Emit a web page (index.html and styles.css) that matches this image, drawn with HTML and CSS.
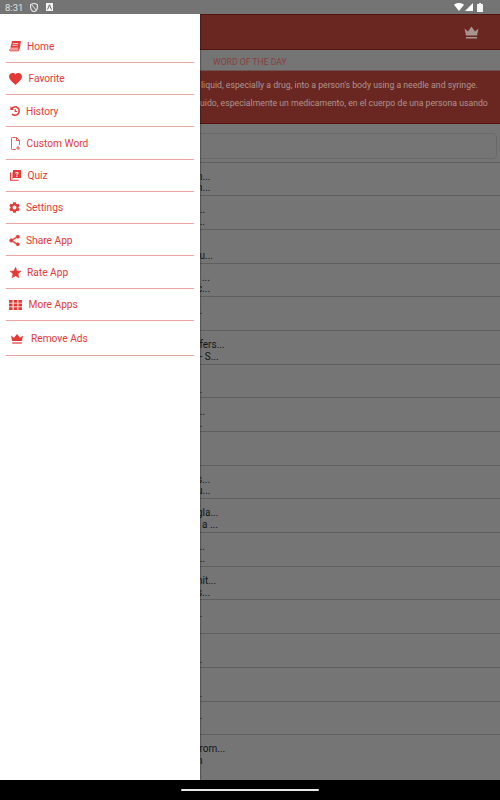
FILE: index.html
```html
<!DOCTYPE html>
<html lang="en">
<head>
  <meta charset="UTF-8">
  <meta name="viewport" content="width=device-width, initial-scale=1.0">
  <title>Dictionary</title>
  <link rel="stylesheet" href="styles.css">
</head>
<body>
  <div class="screen">
    <!-- Status bar -->
    <div class="status-bar">
      <span class="status-time">8:31</span>
      <svg class="status-shield" width="8" height="9" viewBox="0 0 8 9"><path d="M4 .3 7.4 1.6v2.6C7.4 6.400 5.900 8 4 8.700 2.100 8 .6 6.400 .6 4.200V1.600z" fill="none" stroke="#e2e2e2" stroke-width="1.200"/><path d="M1.500 1.500 6.500 7.500" stroke="#e2e2e2" stroke-width="1"/></svg>
      <svg class="status-a" width="7" height="8" viewBox="0 0 7 8"><rect width="7" height="8" fill="#f2f2f2"/><path d="M1.500 6.500 3.500 1.800 5.500 6.500" fill="none" stroke="#666" stroke-width="1"/></svg>
      <div class="status-right">
        <svg width="10" height="8" viewBox="0 0 10 8"><path d="M0 1.800C2.800-.6 7.200-.6 10 1.800L5 8z" fill="#fff"/></svg>
        <svg width="8" height="8" viewBox="0 0 8 8"><path d="M8 0V8H0z" fill="#fff"/></svg>
        <svg class="status-battery" width="6" height="9" viewBox="0 0 6 9"><path d="M2 0h2v1h2v8H0V1h2z" fill="#f4f4f4"/></svg>
      </div>
    </div>

    <div class="main">
      <!-- App behind the drawer -->
      <div class="app">
        <div class="app-header">
          <svg width="15" height="13" viewBox="0 0 15 13"><path d="M.5 2.500 4 5.500 7.500.5 11 5.500 14.500 2.500 13 9.500H2z" fill="#a8938f"/><rect x="2" y="11" width="11" height="1.500" fill="#a8938f"/></svg>
        </div>
        <div class="wod-title">WORD OF THE DAY</div>
        <div class="wod-card">
          <div class="wod-en">liquid, especially a drug, into a person's body using a needle and syringe.</div>
          <div class="wod-es">uido, especialmente un medicamento, en el cuerpo de una persona usando</div>
        </div>
        <div class="search-box"></div>
        <div class="word-list">
          <div class="word-row"><div>n...</div><div>n...</div></div>
          <div class="word-row"><div>...</div><div>...</div></div>
          <div class="word-row"><div>.</div><div>&nbsp;u...</div></div>
          <div class="word-row"><div>&nbsp;&nbsp;...</div><div>c...</div></div>
          <div class="word-row"><div>..</div><div>.</div></div>
          <div class="word-row"><div>ifers...</div><div>&nbsp;- S...</div></div>
          <div class="word-row"><div>&nbsp;</div><div>..</div></div>
          <div class="word-row"><div>...</div><div>..</div></div>
          <div class="word-row"></div>
          <div class="word-row"><div>s...</div><div>u...</div></div>
          <div class="word-row"><div>gla...</div><div>&nbsp;&nbsp;a ...</div></div>
          <div class="word-row"><div>...</div><div>...</div></div>
          <div class="word-row"><div>nit...</div><div>s...</div></div>
          <div class="word-row"><div>..</div><div>.</div></div>
          <div class="word-row"><div>&nbsp;</div><div>..</div></div>
          <div class="word-row"><div>&nbsp;</div><div>..</div></div>
          <div class="word-row"><div>..</div><div>&nbsp;</div></div>
          <div class="word-row word-row-last"><div>&nbsp;rom...</div><div>n</div></div>
        </div>
      </div>

      <!-- Navigation drawer -->
      <nav class="drawer">
        <a class="nav-item">
          <svg class="nav-icon" width="12" height="11" viewBox="0 0 12 11"><path d="M3 .5h8.500L9.500 8H1.500C.4 8 .2 9.800 1.300 9.800H9.500l1.500-6" fill="none" stroke="#e53935" stroke-width="1"/><path d="M3 .5h8.500L9.800 6.800H1.400z" fill="#e53935"/><path d="M3.800 2.500h5.500M3.300 4.300h5.500" stroke="#fff" stroke-width=".7"/></svg>
          <span>Home</span>
        </a>
        <a class="nav-item gap-wide">
          <svg class="nav-icon" width="13" height="12" viewBox="2 3 20 18.400"><path d="M12 21.350l-1.450-1.320C5.400 15.360 2 12.280 2 8.500 2 5.420 4.420 3 7.500 3c1.740 0 3.410.81 4.500 2.090C13.090 3.810 14.760 3 16.500 3 19.580 3 22 5.420 22 8.500c0 3.780-3.400 6.860-8.550 11.540L12 21.350z"/></svg>
          <span>Favorite</span>
        </a>
        <a class="nav-item">
          <svg class="nav-icon icon-shift" width="10" height="10" viewBox="0 0 10 10"><path d="M1.700 2.500A4.200 4.200 0 1 1 2 8" fill="none" stroke="#e53935" stroke-width="1.500"/><path d="M.4.300V3.900H4z" fill="#e53935"/><path d="M5.200 3V5.500H7" fill="none" stroke="#e53935" stroke-width="1.100"/></svg>
          <span>History</span>
        </a>
        <a class="nav-item gap-wide">
          <svg class="nav-icon icon-shift-2" width="9" height="13" viewBox="0 0 9 13"><path d="M5 12.500H1.200C.8 12.500.5 12.200.5 11.800V1.200C.5.800.8.500 1.200.500H5.500L8.500 3.500V8" fill="none" stroke="#e53935" stroke-width=".8"/><path d="M5.500.5V3.500H8.500" fill="none" stroke="#e53935" stroke-width=".8"/><path d="M7 9V13M5 11H9" stroke="#e53935" stroke-width=".8"/></svg>
          <span>Custom Word</span>
        </a>
        <a class="nav-item gap-wide">
          <svg class="nav-icon icon-shift" width="11" height="11" viewBox="0 0 11 11"><rect x="3" y="0" width="8" height="8" fill="#e53935"/><path d="M.6 2.500V10.300H8.500" fill="none" stroke="#e53935" stroke-width="1.100"/><rect x="2" y="2" width="1" height="7" fill="#e99a97"/><text x="7" y="6.800" class="quiz-mark">?</text></svg>
          <span>Quiz</span>
        </a>
        <a class="nav-item">
          <svg class="nav-icon" width="11" height="11" viewBox="2.500 2 19 20"><path d="M19.140 12.940c.04-.3.060-.61.060-.94 0-.32-.02-.64-.07-.94l2.030-1.580c.18-.14.230-.41.120-.61l-1.920-3.320c-.12-.22-.37-.29-.59-.22l-2.390.96c-.5-.38-1.030-.7-1.620-.94l-.36-2.540c-.04-.24-.24-.41-.48-.41h-3.840c-.24 0-.43.17-.47.41l-.36 2.540c-.59.24-1.130.57-1.620.94l-2.390-.96c-.22-.08-.47 0-.59.22L2.740 8.870c-.12.21-.08.47.12.61l2.030 1.580c-.05.3-.09.63-.09.94s.02.64.07.94l-2.030 1.580c-.18.14-.23.41-.12.61l1.920 3.320c.12.22.37.29.59.22l2.390-.96c.5.38 1.030.7 1.620.94l.36 2.540c.05.24.24.41.48.41h3.840c.24 0 .44-.17.47-.41l.36-2.540c.59-.24 1.130-.56 1.620-.94l2.390.96c.22.08.47 0 .59-.22l1.920-3.320c.12-.22.070-.47-.12-.61l-2.010-1.580zM12 15.600c-1.980 0-3.600-1.620-3.600-3.600s1.620-3.600 3.600-3.600 3.600 1.620 3.600 3.600-1.620 3.600-3.600 3.600z"/></svg>
          <span>Settings</span>
        </a>
        <a class="nav-item">
          <svg class="nav-icon icon-bold" width="11" height="11" viewBox="3 2 18 20"><path d="M18 16.080c-.76 0-1.440.3-1.960.77L8.910 12.700c.05-.23.090-.46.090-.7s-.04-.47-.09-.7l7.050-4.110c.54.5 1.250.81 2.040.81 1.660 0 3-1.340 3-3s-1.340-3-3-3-3 1.340-3 3c0 .24.040.47.090.7L8.040 9.810C7.500 9.310 6.790 9 6 9c-1.660 0-3 1.340-3 3s1.340 3 3 3c.79 0 1.500-.31 2.040-.81l7.120 4.160c-.05.21-.08.43-.08.65 0 1.610 1.310 2.920 2.920 2.920s2.920-1.310 2.920-2.920-1.310-2.920-2.920-2.920z"/></svg>
          <span>Share App</span>
        </a>
        <a class="nav-item">
          <svg class="nav-icon icon-shift icon-bold" width="11" height="11" viewBox="2 2 20 19"><path d="M12 17.270L18.180 21l-1.640-7.030L22 9.240l-7.190-.61L12 2 9.190 8.630 2 9.240l5.460 4.730L5.820 21z"/></svg>
          <span>Rate App</span>
        </a>
        <a class="nav-item gap-wide">
          <svg class="nav-icon" width="13" height="10" viewBox="0 0 13 10"><path d="M0 0h3.600v2.800H0zM4.700 0h3.600v2.800H4.700zM9.400 0H13v2.800H9.400zM0 3.600h3.600v2.800H0zM4.700 3.600h3.600v2.800H4.700zM9.400 3.600H13v2.800H9.400zM0 7.200h3.600V10H0zM4.700 7.200h3.600V10H4.700zM9.400 7.200H13V10H9.400z"/></svg>
          <span>More Apps</span>
        </a>
        <a class="nav-item nav-item-last">
          <svg class="nav-icon icon-shift-2" width="12" height="10" viewBox="0 0 12 10"><path d="M0 1.500 3 3.800 6 0 9 3.800 12 1.500 10.800 7H1.200z"/><rect x="1.200" y="8.400" width="9.600" height="1.200"/></svg>
          <span>Remove Ads</span>
        </a>
      </nav>
    </div>

    <!-- Bottom gesture bar -->
    <div class="gesture-bar"><div class="gesture-handle"></div></div>
  </div>
</body>
</html>
```

FILE: styles.css
```css
html, body {
  margin: 0;
  padding: 0;
}

body {
  font-family: Roboto, "Liberation Sans", sans-serif;
}

.screen {
  width: 500px;
  height: 800px;
  display: flex;
  flex-direction: column;
  overflow: hidden;
  background: #757575;
}

/* Status bar */
.status-bar {
  height: 14px;
  flex: none;
  display: flex;
  align-items: center;
  padding: 0 17px 0 5px;
  background: #747474;
  color: #e2e2e2;
  font-size: 9.5px;
}

.status-time {
  width: 25px;
}

.status-shield {
  margin-right: 8px;
}

.status-right {
  margin-left: auto;
  display: flex;
  align-items: center;
  gap: 1px;
}

.status-battery {
  margin-left: 3px;
}

/* App behind the drawer */
.main {
  flex: 1;
  position: relative;
  overflow: hidden;
}

.app-header {
  height: 34px;
  display: flex;
  align-items: center;
  justify-content: flex-end;
  padding-right: 21px;
  background: #6a2721;
  border-top: 1px solid #551410;
  border-bottom: 1px solid #551410;
}

.wod-title {
  height: 20px;
  line-height: 24px;
  padding-left: 213px;
  font-size: 8.650px;
  color: #86403b;
  background: #757575;
  border-bottom: 1px solid #6d5552;
}

.wod-card {
  height: 52px;
  font-size: 8.700px;
  line-height: 18px;
  color: #b09490;
  background: #6a2721;
  border-bottom: 1px solid #551410;
  white-space: nowrap;
}

.wod-en {
  padding: 5px 0 0 201px;
}

.wod-es {
  padding-left: 200px;
}

.search-box {
  height: 24px;
  margin: 9px 3px 2.500px 190px;
  border: 1px solid #6a6a6a;
  border-radius: 4px;
}

.word-list {
  border-top: 1px solid #5f5f5f;
}

.word-row {
  height: 33.700px;
  box-sizing: border-box;
  padding: 8px 0 0 197px;
  font-size: 10px;
  line-height: 11.800px;
  color: #161616;
  border-bottom: 1px solid #5f5f5f;
  white-space: nowrap;
}

.word-row-last {
  border-bottom: none;
}

/* Navigation drawer */
.drawer {
  position: absolute;
  top: 0;
  left: 0;
  bottom: 0;
  width: 200px;
  box-sizing: border-box;
  padding: 16.500px 6px 0;
  background: #fff;
  box-shadow: 1px 0 1px rgba(0, 0, 0, 0.25);
}

.nav-item {
  height: 32.250px;
  box-sizing: border-box;
  display: flex;
  align-items: center;
  gap: 6px;
  padding: 1px 0 0 3px;
  font-size: 10.200px;
  color: #e53935;
  border-bottom: 1px solid #eda5a3;
}

.nav-item.gap-wide {
  gap: 6.500px;
}

.nav-item-last {
  height: 35.500px;
  gap: 8px;
}

.nav-icon {
  fill: #e53935;
  flex: none;
}

.icon-bold {
  stroke: #e53935;
  stroke-width: 1;
}

.icon-shift {
  margin-left: 1px;
}

.icon-shift-2 {
  margin-left: 2px;
}

.quiz-mark {
  font-size: 7px;
  font-weight: 700;
  fill: #fff;
  text-anchor: middle;
}

/* Bottom gesture bar */
.gesture-bar {
  height: 20px;
  flex: none;
  display: flex;
  align-items: center;
  justify-content: center;
  background: #000;
}

.gesture-handle {
  width: 138px;
  height: 2px;
  background: #e8e8e8;
  border-radius: 1px;
}
```
